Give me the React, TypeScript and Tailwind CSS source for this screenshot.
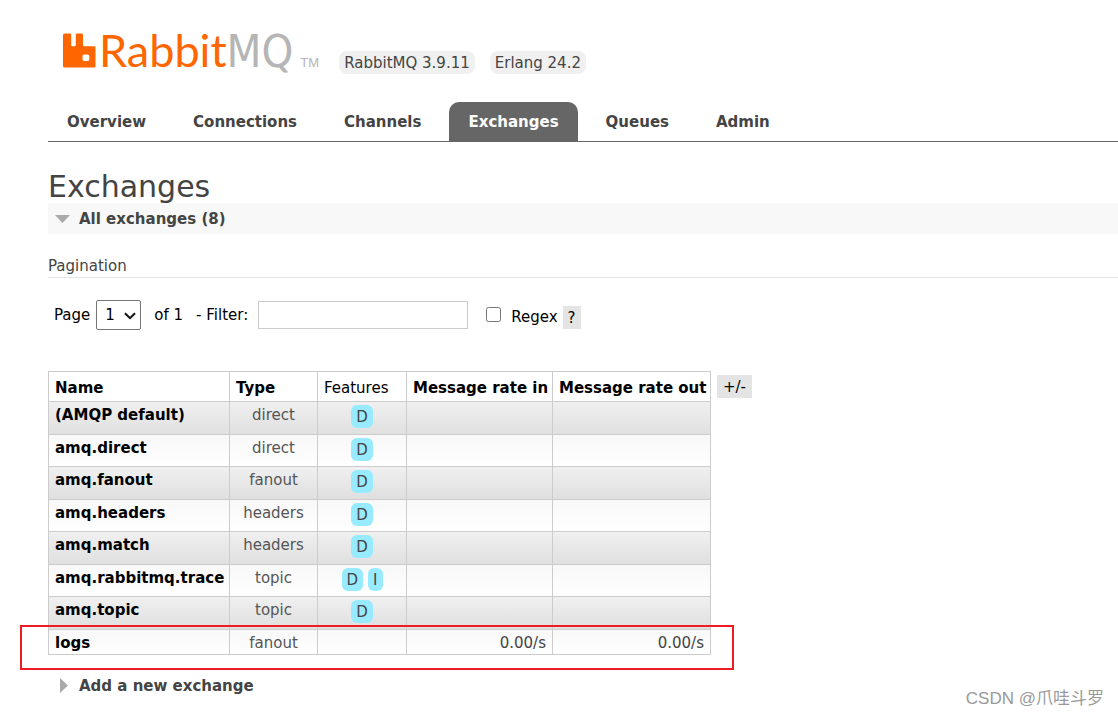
import { useState } from "react";

type Exchange = { name: string; type: string; features: string[]; rateIn?: string; rateOut?: string };

const tabs = ["Overview", "Connections", "Channels", "Exchanges", "Queues", "Admin"];

const exchanges: Exchange[] = [
  { name: "(AMQP default)", type: "direct", features: ["D"] },
  { name: "amq.direct", type: "direct", features: ["D"] },
  { name: "amq.fanout", type: "fanout", features: ["D"] },
  { name: "amq.headers", type: "headers", features: ["D"] },
  { name: "amq.match", type: "headers", features: ["D"] },
  { name: "amq.rabbitmq.trace", type: "topic", features: ["D", "I"] },
  { name: "amq.topic", type: "topic", features: ["D"] },
  { name: "logs", type: "fanout", features: [], rateIn: "0.00/s", rateOut: "0.00/s" },
];

function Logo() {
  return (
    <a href="#/" aria-label="RabbitMQ" className="flex items-end gap-[3px]">
      <svg viewBox="0 0 33 35" className="mb-[10px] h-[35px] w-[33px]" fill="#ff6600" aria-hidden="true">
        <path
          fillRule="evenodd"
          d="M1.500 0.500h5.500q1.200 0 1.200 1.200v10.200q0 1.300 1.300 1.300h2q1.300 0 1.300-1.300V1.700q0-1.200 1.200-1.200h4.800q1.200 0 1.200 1.200v10.200q0 1.300 1.300 1.300h9.900q1.300 0 1.300 1.300v18.700q0 1.300-1.300 1.300H1.500Q0 34.500 0 33.200V2Q0 0.500 1.500 0.500ZM21.300 21.500q-1.800 0-1.800 1.800v2.900q0 1.800 1.800 1.800h3.200q1.800 0 1.800-1.800v-2.900q0-1.800-1.800-1.800Z"
        />
      </svg>
      <span className="flex items-baseline">
        <span className="font-['Lato',sans-serif] text-[45px] leading-[56px] text-[#ff6600]">Rabbit</span>
        <span className="font-['DejaVu_Sans_Condensed',sans-serif] text-[45px] leading-[52px] text-[#b5b5b5]">MQ</span>
        <span className="ml-[7px] font-['Liberation_Sans',sans-serif] text-[13px] leading-5 text-[#b5b5b5]">TM</span>
      </span>
    </a>
  );
}

function Header() {
  return (
    <header>
      <div className="flex h-[78px] items-end pl-[15px]">
        <Logo />
        <ul className="mb-1 ml-5 flex gap-[15px]">
          <li className="rounded-lg bg-[#f0f0f0] px-[5px] pt-[2px] leading-[21px]">RabbitMQ 3.9.11</li>
          <li className="rounded-lg bg-[#f0f0f0] px-[5px] pt-[2px] leading-[21px]">Erlang 24.2</li>
        </ul>
      </div>
      <nav className="mt-6 border-b border-[#666]">
        <ul className="flex gap-[9px]">
          {tabs.map((tab) => (
            <li key={tab}>
              <a
                href={"#/" + tab.toLowerCase()}
                className={
                  tab === "Exchanges"
                    ? "block rounded-t-[10px] bg-[#666] px-[19px] pt-[2px] font-bold leading-[37px] text-white"
                    : "block px-[19px] pt-[2px] font-bold leading-[37px] text-[#444]"
                }
              >
                {tab}
              </a>
            </li>
          ))}
        </ul>
      </nav>
    </header>
  );
}

function Pagination() {
  const [filter, setFilter] = useState("");
  const [regex, setRegex] = useState(false);
  return (
    <div className="mt-[21px] flex h-[31px] items-center pl-[6px] text-black">
      <label htmlFor="page">Page</label>
      <span className="relative ml-[6px]">
        <select
          id="page"
          className="block h-[30px] w-[45px] appearance-none rounded-[2px] border border-[#767676] bg-white pl-2"
        >
          <option>1</option>
        </select>
        <svg
          viewBox="0 0 12 8"
          className="pointer-events-none absolute right-[5px] top-3 h-2 w-3"
          fill="none"
          stroke="#111"
          strokeWidth="2"
          aria-hidden="true"
        >
          <path d="M1 1.200l5 5 5-5" />
        </svg>
      </span>
      <span className="ml-[13px]">of 1</span>
      <label htmlFor="filter" className="ml-[13px]">
        - Filter:
      </label>
      <input
        id="filter"
        type="text"
        value={filter}
        onChange={(e) => setFilter(e.target.value)}
        className="ml-[10px] h-7 w-[210px] border border-[#ccc] px-1"
      />
      <input
        id="regex"
        type="checkbox"
        checked={regex}
        onChange={(e) => setRegex(e.target.checked)}
        className="ml-[18px] h-[15px] w-[15px]"
      />
      <label htmlFor="regex" className="ml-[10px] mt-[5px]">
        Regex
      </label>
      <button type="button" className="ml-[5px] mt-[5px] bg-[#e4e4e4] px-[5px] pt-[2px] leading-[21px]">
        ?
      </button>
    </div>
  );
}

function ExchangeTable() {
  return (
    <div className="relative mt-[41px] flex items-start">
      <table className="w-[663px] table-fixed border-collapse leading-[18px] [&_td]:border [&_td]:border-[#ccc] [&_td]:px-[6px] [&_th]:border [&_th]:border-[#ccc] [&_th]:px-[6px]">
        <colgroup>
          <col className="w-[181px]" />
          <col className="w-[88px]" />
          <col className="w-[89px]" />
          <col className="w-[146px]" />
          <col className="w-[158px]" />
        </colgroup>
        <thead>
          <tr className="h-[30px] whitespace-nowrap text-left text-black">
            <th className="pt-[3px]"><a href="#name">Name</a></th>
            <th className="pt-[3px]"><a href="#type">Type</a></th>
            <th className="pt-[3px] font-normal">Features</th>
            <th className="pt-[3px]"><a href="#in">Message rate in</a></th>
            <th className="pt-[3px]"><a href="#out">Message rate out</a></th>
          </tr>
        </thead>
        <tbody>
          {exchanges.map((x, i) => (
            <tr
              key={x.name}
              className={
                x.features.length === 0
                  ? "h-[25px] bg-linear-to-b from-[#f8f8f8] to-white align-top"
                  : i % 2 === 0
                    ? "h-[33px] bg-linear-to-b from-[#f0f0f0] to-[#dfdfdf] align-top"
                    : "h-8 bg-linear-to-b from-[#f8f8f8] to-white align-top"
              }
            >
              <td className="whitespace-nowrap pt-1 font-bold text-black">
                <a href={"#/exchanges/" + x.name}>{x.name}</a>
              </td>
              <td className="pt-1 text-center text-[#555]">{x.type}</td>
              <td className="pt-[3px]">
                <div className="flex justify-center gap-[5px]">
                  {x.features.map((f) => (
                    <abbr key={f} className="rounded-md bg-[#98ebff] px-[5px] pt-[2px] leading-[21px] no-underline">
                      {f}
                    </abbr>
                  ))}
                </div>
              </td>
              <td className="pt-1 text-right">{x.rateIn}</td>
              <td className="pt-1 text-right">{x.rateOut}</td>
            </tr>
          ))}
        </tbody>
      </table>
      <button type="button" className="ml-[6px] mt-1 bg-[#e4e4e4] px-[6px] pt-[2px] leading-[21px] text-black">
        +/-
      </button>
      <div className="pointer-events-none absolute -bottom-[15px] -left-7 h-[45px] w-[714px] border-2 border-[#ed1c24]" />
    </div>
  );
}

export default function App() {
  return (
    <div className="relative min-h-screen bg-white pl-12 font-['DejaVu_Sans',sans-serif] text-[15px] leading-5 text-[#444]">
      <Header />
      <main>
        <h1 className="mt-7 text-[30px] leading-[33px]">Exchanges</h1>
        <h2 className="flex h-[31px] items-center gap-[9px] bg-[#f8f8f8] pl-[7px] font-bold">
          <svg viewBox="0 0 15 8" className="h-2 w-[15px]" fill="#aaa" aria-hidden="true">
            <path d="M0 0h15L7.500 8z" />
          </svg>
          All exchanges (8)
        </h2>
        <h3 className="mt-[22px] border-b border-[#e4e4e4] leading-[21px]">Pagination</h3>
        <Pagination />
        <ExchangeTable />
        <h2 className="mt-[15px] flex h-[31px] items-center gap-[11px] pl-3 font-bold">
          <svg viewBox="0 0 8 15" className="h-[15px] w-2" fill="#aaa" aria-hidden="true">
            <path d="M0 0v15L8 7.500z" />
          </svg>
          Add a new exchange
        </h2>
      </main>
      <p className="absolute bottom-[7px] right-[14px] font-['Liberation_Sans','Noto_Sans_CJK_SC',sans-serif] text-[17px] leading-5 text-[#999]">
        CSDN @爪哇斗罗
      </p>
    </div>
  );
}
